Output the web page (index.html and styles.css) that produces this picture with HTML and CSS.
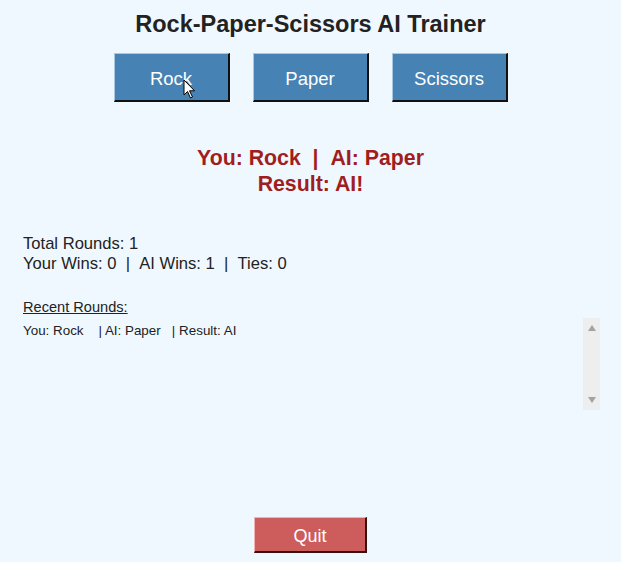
FILE: index.html
```html
<!DOCTYPE html>
<html>
<head>
<meta charset="utf-8">
<link rel="stylesheet" href="styles.css">
</head>
<body>
<div class="app">
  <h1 class="title">Rock-Paper-Scissors AI Trainer</h1>
  <div class="choices">
    <button class="btn move">Rock</button>
    <button class="btn move">Paper</button>
    <button class="btn move">Scissors</button>
  </div>
  <div class="result">
    <div>You: Rock &nbsp;| &nbsp;AI: Paper</div>
    <div>Result: AI!</div>
  </div>
  <div class="stats">
    <div>Total Rounds: 1</div>
    <div>Your Wins: 0 &nbsp;| &nbsp;AI Wins: 1 &nbsp;| &nbsp;Ties: 0</div>
  </div>
  <div class="recent-label">Recent Rounds:</div>
  <div class="listbox">
    <div class="items">
      <div class="item">You: Rock    | AI: Paper   | Result: AI</div>
    </div>
    <div class="scrollbar">
      <span class="arrow up"></span>
      <span class="arrow down"></span>
    </div>
  </div>
  <div class="quit-row">
    <button class="btn quit">Quit</button>
  </div>
  <svg class="cursor" width="14" height="21" viewBox="0 0 14 21">
    <path d="M1 1 L1 16 L4.5 12.5 L7.5 19 L9.5 18 L6.5 11.8 L11.5 11.8 Z" fill="#fff" stroke="#000" stroke-width="1" stroke-linejoin="round"/>
  </svg>
</div>
</body>
</html>
```
FILE: styles.css
```css
html, body {
  margin: 0;
  padding: 0;
  background: #f0f8ff;
}
.app {
  position: relative;
  width: 621px;
  height: 562px;
  font-family: "Liberation Sans", Arial, sans-serif;
  color: #222;
}
.title {
  margin: 0;
  padding-top: 10px;
  font-size: 23.5px;
  line-height: 28px;
  font-weight: bold;
  text-align: center;
  color: #222;
}
.choices {
  display: flex;
  justify-content: center;
  gap: 23px;
  margin-top: 15px;
}
.btn {
  font-family: "Liberation Sans", Arial, sans-serif;
  color: #fff;
  padding: 3px 0 0 0;
  cursor: default;
  border-style: solid;
  border-width: 1px 2px 2px 1px;
}
.move {
  width: 116px;
  height: 49px;
  font-size: 18.5px;
  background: #4682b4;
  border-color: #a9c8e4 #111 #111 #a9c8e4;
}
.result {
  margin-top: 43px;
  text-align: center;
  font-weight: bold;
  font-size: 21.3px;
  line-height: 26px;
  color: #a01e1e;
}
.stats {
  margin-top: 37px;
  padding-left: 23px;
  font-size: 16.6px;
  line-height: 20px;
  color: #222;
}
.recent-label {
  margin-top: 24px;
  padding-left: 23px;
  font-size: 14.6px;
  line-height: 18px;
  text-decoration: underline;
  color: #222;
}
.listbox {
  display: flex;
  margin: 2px 21px 0 21px;
  height: 92px;
}
.items {
  flex: 1;
  padding: 5px 2px;
}
.item {
  white-space: pre;
  font-size: 13.4px;
  line-height: 16px;
  color: #222;
}
.scrollbar {
  width: 17px;
  background: #eeeeee;
  display: flex;
  flex-direction: column;
  justify-content: space-between;
  align-items: center;
  padding: 7px 0 7px;
}
.arrow {
  width: 0;
  height: 0;
  border-left: 4.5px solid transparent;
  border-right: 4.5px solid transparent;
}
.arrow.up {
  border-bottom: 6px solid #a3a3a3;
}
.arrow.down {
  border-top: 6px solid #a3a3a3;
}
.quit-row {
  display: flex;
  justify-content: center;
  margin-top: 107px;
}
.quit {
  width: 113px;
  height: 36px;
  font-size: 18px;
  background: #cd5c5c;
  border-color: #f2b3b3 #3a1010 #3a1010 #f2b3b3;
}
.cursor {
  position: absolute;
  left: 183px;
  top: 79px;
}
```
